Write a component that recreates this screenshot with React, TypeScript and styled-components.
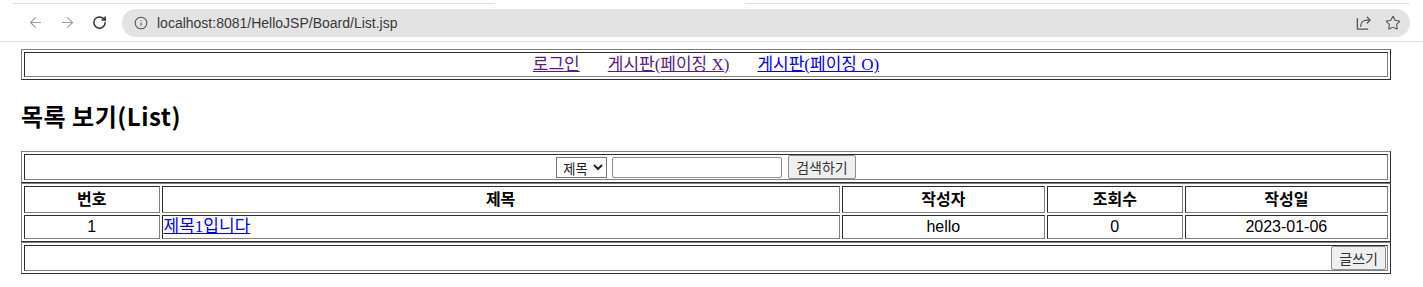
import React from "react";
import styled, { createGlobalStyle } from "styled-components";
import { ArrowLeft, ArrowRight, RotateCw, Info, Star } from "lucide-react";

const GlobalStyle = createGlobalStyle`
  html, body { margin: 0; padding: 0; background: #fff; }
  body { font-family: "Liberation Serif", "Noto Sans CJK KR", serif; font-size: 16px; color: #000; }
`;

const Chrome = styled.header`
  height: 42px;
  box-sizing: border-box;
  border-bottom: 1px solid #dadce0;
  display: flex;
  flex-direction: column;
`;

const TabEdge = styled.div`
  height: 4px;
  display: flex;
  align-items: flex-end;
  padding: 0 13px;
  gap: 250px;
`;

const TabLine = styled.div<{ $w?: number }>`
  height: 1px;
  background: #f2dbe3;
  ${(p) => (p.$w ? `width: ${p.$w}px;` : "flex: 1;")}
`;

const Toolbar = styled.div`
  flex: 1;
  display: flex;
  align-items: center;
  padding: 0 13px 0 19px;
`;

const IconSlot = styled.div<{ $color: string }>`
  width: 32px;
  display: flex;
  justify-content: center;
  align-items: center;
  color: ${(p) => p.$color};
`;

const Omnibox = styled.div`
  flex: 1;
  margin-left: 7px;
  height: 28px;
  border-radius: 14px;
  background: #e3e3e3;
  display: flex;
  align-items: center;
  padding: 0 3px 0 12px;
`;

const Url = styled.span`
  margin-left: 9px;
  font-family: "Liberation Sans", Arial, sans-serif;
  font-size: 14px;
  color: #3a3a3a;
  flex: 1;
`;

const OmniIcon = styled.div`
  width: 29px;
  display: flex;
  justify-content: center;
  align-items: center;
  color: #555;
`;

const Page = styled.main`
  padding: 7px 32px 0 21px;
`;

const Grid = styled.table`
  width: 100%;
  border: 1px outset gray;
  border-spacing: 2px;
  border-collapse: separate;
`;

const Cell = styled.td<{ $align?: string; $tight?: boolean }>`
  border: 1px inset gray;
  padding: ${(p) => (p.$tight ? "0" : "1px")};
  text-align: ${(p) => p.$align || "center"};
  font-family: "Liberation Sans", "Noto Sans CJK KR", sans-serif;
  font-size: 16px;
  line-height: 20px;
`;

const HeadCell = styled.th<{ $w: string }>`
  border: 1px inset gray;
  padding: 1px;
  width: ${(p) => p.$w};
  text-align: center;
  font-family: "Liberation Sans", "Noto Sans CJK KR", sans-serif;
  font-weight: bold;
  font-size: 16px;
  line-height: 23px;
`;

const NavCell = styled.td`
  border: 1px inset gray;
  padding: 1px;
  text-align: center;
  line-height: 21px;
  font-size: 17px;
`;

const NavLink = styled.a<{ $visited?: boolean }>`
  color: ${(p) => (p.$visited ? "#551a8b" : "#0000ee")};
  text-decoration: underline;
  margin: 0 14px;
  font-family: "Liberation Serif", "Noto Sans CJK KR", serif;
`;

const Title = styled.h2`
  font-family: "Noto Sans CJK KR", sans-serif;
  font-weight: bold;
  font-size: 24px;
  letter-spacing: 0.5px;
  line-height: 30px;
  margin: 21px 0 20px 0;
`;

const SubjectLink = styled.a`
  color: #0000ee;
  text-decoration: underline;
  font-family: "Liberation Serif", "Noto Sans CJK KR", serif;
  font-size: 17px;
  line-height: 20px;
`;

const SearchBar = styled.div`
  display: flex;
  justify-content: center;
  align-items: center;
  gap: 5px;
  height: 24px;
`;

const Select = styled.select`
  width: 51px;
  height: 21px;
  box-sizing: border-box;
  font-family: "Noto Sans CJK KR", sans-serif;
  font-size: 13.33px;
  border: 1px solid #767676;
  border-radius: 0;
  padding: 0 0 0 2px;
  background: #fff;
  color: #222;
`;

const TextInput = styled.input`
  width: 170px;
  height: 21px;
  box-sizing: border-box;
  border: 1px solid #8f8f8f;
  border-radius: 2px;
  padding: 1px 2px;
  font-size: 13.33px;
`;

const Button = styled.button`
  height: 24px;
  box-sizing: border-box;
  padding: 0 7px;
  border: 1px solid #8f8f8f;
  border-radius: 2px;
  background: #efefef;
  font-family: "Noto Sans CJK KR", sans-serif;
  font-size: 14px;
  color: #333;
  margin-left: 1px;
`;

const WriteBar = styled.div`
  display: flex;
  justify-content: flex-end;
  align-items: center;
  height: 24px;
  padding-right: 1px;
`;

const ShareIcon = () => (
  <svg width="17" height="17" viewBox="0 0 18 18" fill="none" stroke="currentColor" strokeWidth="1.4" strokeLinecap="round" strokeLinejoin="round">
    <path d="M2.5 5v11h11" />
    <path d="M6 13c0-4 3-6.5 7-6.5h2.5" />
    <path d="M13 3.5l3 3-3 3" />
  </svg>
);

const columns = [
  { label: "번호", w: "10%" },
  { label: "제목", w: "50%" },
  { label: "작성자", w: "15%" },
  { label: "조회수", w: "10%" },
  { label: "작성일", w: "15%" },
];

export default function App() {
  return (
    <>
      <GlobalStyle />
      <Chrome>
        <TabEdge>
          <TabLine $w={482} />
          <TabLine />
        </TabEdge>
        <Toolbar>
          <IconSlot $color="#9e9e9e">
            <ArrowLeft size={17} strokeWidth={1.5} />
          </IconSlot>
          <IconSlot $color="#9e9e9e">
            <ArrowRight size={17} strokeWidth={1.5} />
          </IconSlot>
          <IconSlot $color="#333">
            <RotateCw size={15} strokeWidth={2.4} />
          </IconSlot>
          <Omnibox>
            <Info size={14} strokeWidth={1.8} color="#555" />
            <Url>localhost:8081/HelloJSP/Board/List.jsp</Url>
            <OmniIcon>
              <ShareIcon />
            </OmniIcon>
            <OmniIcon>
              <Star size={16} strokeWidth={1.6} />
            </OmniIcon>
          </Omnibox>
        </Toolbar>
      </Chrome>
      <Page>
        <Grid>
          <tbody>
            <tr>
              <NavCell>
                <NavLink href="#" $visited>로그인</NavLink>
                <NavLink href="#" $visited>게시판(페이징 X)</NavLink>
                <NavLink href="#">게시판(페이징 O)</NavLink>
              </NavCell>
            </tr>
          </tbody>
        </Grid>
        <Title>목록 보기(List)</Title>
        <form onSubmit={(e) => e.preventDefault()}>
          <Grid>
            <tbody>
              <tr>
                <Cell $tight>
                  <SearchBar>
                    <Select defaultValue="title">
                      <option value="title">제목</option>
                      <option value="content">내용</option>
                    </Select>
                    <TextInput type="text" />
                    <Button type="submit">검색하기</Button>
                  </SearchBar>
                </Cell>
              </tr>
            </tbody>
          </Grid>
        </form>
        <Grid>
          <tbody>
            <tr>
              {columns.map((c) => (
                <HeadCell key={c.label} $w={c.w}>
                  {c.label}
                </HeadCell>
              ))}
            </tr>
            <tr>
              <Cell>1</Cell>
              <Cell $align="left">
                <SubjectLink href="#">제목1입니다</SubjectLink>
              </Cell>
              <Cell>hello</Cell>
              <Cell>0</Cell>
              <Cell>2023-01-06</Cell>
            </tr>
          </tbody>
        </Grid>
        <Grid>
          <tbody>
            <tr>
              <Cell $tight>
                <WriteBar>
                  <Button type="button">글쓰기</Button>
                </WriteBar>
              </Cell>
            </tr>
          </tbody>
        </Grid>
      </Page>
    </>
  );
}
